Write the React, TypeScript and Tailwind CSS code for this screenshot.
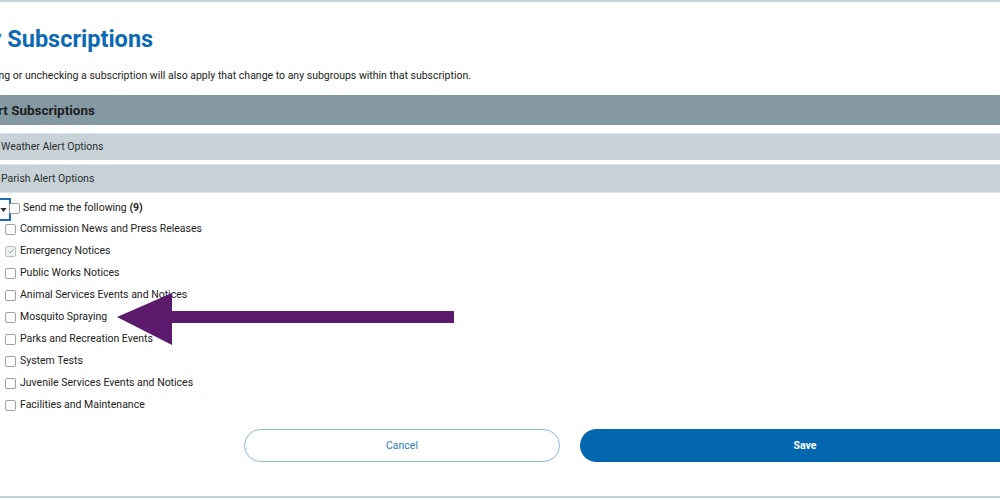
const items = [
  { label: "Commission News and Press Releases", checked: false },
  { label: "Emergency Notices", checked: true },
  { label: "Public Works Notices", checked: false },
  { label: "Animal Services Events and Notices", checked: false },
  { label: "Mosquito Spraying", checked: false },
  { label: "Parks and Recreation Events", checked: false },
  { label: "System Tests", checked: false },
  { label: "Juvenile Services Events and Notices", checked: false },
  { label: "Facilities and Maintenance", checked: false },
];

const Box = ({ checked = false }: { checked?: boolean }) => (
  <span
    className={`flex items-center justify-center w-[11px] h-[11px] rounded-[2px] border ${
      checked ? "border-[#b9c0c4] bg-[#eef0f1]" : "border-[#9ba3a8] bg-white"
    }`}
  >
    {checked && (
      <svg viewBox="0 0 10 10" className="w-[8px] h-[8px]">
        <path d="M1.5 5.2 L4 7.5 L8.5 2.5" fill="none" stroke="#a3aaae" strokeWidth="1.2" />
      </svg>
    )}
  </span>
);

export default function App() {
  return (
    <div
      className="relative w-[1000px] h-[500px] overflow-hidden bg-white text-[#222]"
      style={{ fontFamily: "Roboto, 'Liberation Sans', sans-serif" }}
    >
      <div className="h-[2px] bg-[#c9d3d8]" />
      <div className="ml-[-30px] w-[1060px]">
        <h1 className="pt-[23px] text-[23.5px] leading-[28px] font-bold text-[#0b6ab3] ml-[-1px]">
          My Subscriptions
        </h1>
        <p className="mt-[16px] text-[10.5px] leading-[14px] text-[#222] ml-[-3px]">
          Checking or unchecking a subscription will also apply that change to any subgroups within that
          subscription.
        </p>

        <div className="mt-[12px] h-[30px] bg-[#8599a3] flex items-center pl-[8px] text-[13.5px] font-bold text-[#1b1f22]">
          Alert Subscriptions
        </div>

        <div className="mt-[8px] border-t border-[#dfe5e8] h-[27px] bg-[#c7d2d7] flex items-center pl-[22px] text-[10.5px] text-[#2a2f33]">
          <span className="mr-[4px] text-[9px] text-[#444]">▸</span>
          Weather Alert Options
        </div>
        <div className="mt-[4px] border-t border-b border-[#dfe5e8] h-[29px] bg-[#c7d2d7] flex items-center pl-[22px] text-[10.5px] text-[#2a2f33]">
          <span className="mr-[4px] text-[9px] text-[#444]">▾</span>
          Parish Alert Options
        </div>

        <div className="flex items-center h-[20px] mt-[5px] pl-[20px] text-[10.5px]">
          <span className="flex items-center w-[21px] h-[23px] border-2 border-[#1f6db3] bg-white mt-[3px] pl-[8px]">
            <svg viewBox="0 0 8 5" className="w-[7px] h-[4px]">
              <path d="M0 0 H8 L4 5 Z" fill="#2d3135" />
            </svg>
          </span>
          <span className="ml-[-2px]">
            <Box />
          </span>
          <span className="ml-[3px]">
            Send me the following <span className="font-bold">(9)</span>
          </span>
        </div>

        <div className="pl-[35px]">
          {items.map((it) => (
            <div key={it.label} className="flex items-center h-[22px] text-[10.5px] text-[#222]">
              <Box checked={it.checked} />
              <span className="ml-[4px]">{it.label}</span>
            </div>
          ))}
        </div>

        <div className="flex gap-[20px] mt-[13px] ml-[274px]">
          <button className="w-[316px] h-[33px] rounded-full border border-[#8db7dc] bg-white text-[10.5px] text-[#2c7bbd]">
            Cancel
          </button>
          <button className="w-[450px] h-[33px] rounded-full bg-[#0367b0] text-[10.5px] font-bold text-white">
            Save
          </button>
        </div>
      </div>
      <div className="mt-[34px] h-[2px] bg-[#c5d0d5]" />

      <svg className="absolute left-0 top-0 pointer-events-none" width="1000" height="500">
        <polygon
          points="117,317 172,293 172,311 454,311 454,323 172,323 172,345"
          fill="#5b1a6b"
        />
      </svg>
    </div>
  );
}
